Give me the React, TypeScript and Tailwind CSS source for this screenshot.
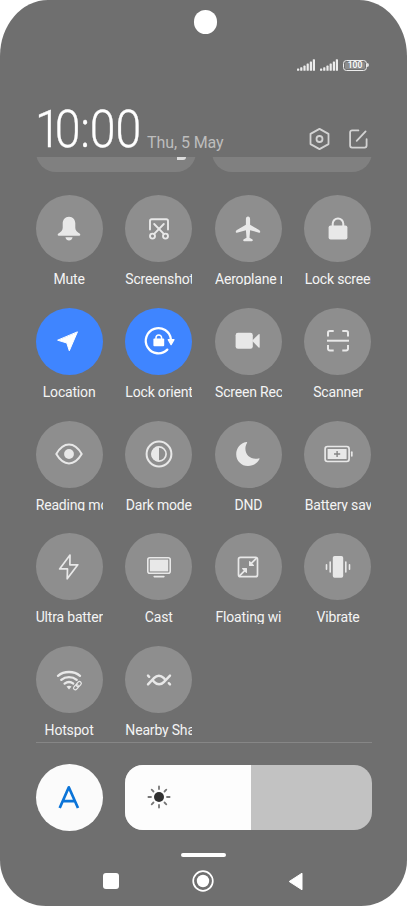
import React from 'react';

type Toggle = {
  label: string;
  icon: React.ReactNode;
  active?: boolean;
};

function Glyph({ children }: { children: React.ReactNode }) {
  return (
    <svg
      viewBox="-16 -16 32 32"
      width="32"
      height="32"
      fill="none"
      stroke="currentColor"
      strokeWidth="2"
      strokeLinecap="round"
      strokeLinejoin="round"
    >
      {children}
    </svg>
  );
}

const toggles: Toggle[] = [
  {
    label: 'Mute',
    icon: (
      <g fill="currentColor" stroke="none">
        <path d="M0-12.3C-4-12.3-6.3-9.3-6.3-5.5V-1C-6.3 1.6-8.5 3-10.6 4.6C-11.8 5.6-11.4 6.7-10.2 6.7H10.2C11.4 6.7 11.8 5.6 10.6 4.6C8.5 3 6.3 1.6 6.3-1V-5.5C6.3-9.3 4-12.3 0-12.3Z" />
        <path d="M-3.6 8.3H3.6C3 10.4 1.8 11.5 0 11.5S-3 10.4-3.6 8.3Z" />
      </g>
    ),
  },
  {
    label: 'Screenshot',
    icon: (
      <g strokeWidth="1.9">
        <path d="M-9 .6V-8A1.7 1.7 0 0 1-7.3-9.7H7.3A1.7 1.7 0 0 1 9-8V.6" />
        <path d="M-4.8-5L4.8 4.9M4.8-5L-4.8 4.9" />
        <circle cx="-6.5" cy="7.1" r="2.5" />
        <circle cx="6.5" cy="7.1" r="2.5" />
      </g>
    ),
  },
  {
    label: 'Aeroplane m',
    icon: (
      <path
        fill="currentColor"
        stroke="none"
        d="M0-12.4C1.4-12.4 2.1-11.5 2.1-10V-4.2L11.1 1.1C12 1.7 12.2 2.2 12.2 3C12.2 3.8 11.7 3.9 11 3.7L2.1 1.2L1.5 8.8L4.2 10.2C5.2 10.9 5 12.2 4 12.2H-4C-5 12.2-5.2 10.9-4.2 10.2L-1.5 8.8L-2.1 1.2L-11 3.7C-11.7 3.9-12.2 3.8-12.2 3C-12.2 2.2-12 1.7-11.1 1.1L-2.1-4.2V-10C-2.1-11.5-1.4-12.4 0-12.4Z"
      />
    ),
  },
  {
    label: 'Lock screen',
    icon: (
      <>
        <rect x="-9.4" y="-3.6" width="18.8" height="14.2" rx="2" fill="currentColor" stroke="none" />
        <path d="M-5.3-3V-5.2A5.3 5.3 0 0 1 5.3-5.2V-3" strokeLinecap="butt" />
      </>
    ),
  },
  {
    label: 'Location',
    active: true,
    icon: <path fill="currentColor" strokeWidth="1" d="M8.3-8.8L.3 9.8L-2.2 2L-11-.7Z" />,
  },
  {
    label: 'Lock orient',
    active: true,
    icon: (
      <>
        <path d="M8.3 8.6A12.6 12.6 0 1 1 11.9-1.6" strokeWidth="2.3" />
        <path d="M9.2-1.3H15L12.1 3.7Z" fill="currentColor" strokeWidth="1.2" />
        <rect x="-5.6" y="-2.4" width="10.8" height="7.6" rx="1" fill="currentColor" stroke="none" />
        <path d="M-3-2V-3.2A2.8 2.8 0 0 1 2.6-3.2V-2" strokeWidth="1.5" />
      </>
    ),
  },
  {
    label: 'Screen Rec',
    icon: (
      <g fill="currentColor" stroke="none">
        <rect x="-12.4" y="-8.2" width="17.2" height="16" rx="2.4" />
        <path d="M4-.2L10.6-6.8Q11.7-7.6 11.7-6.2V5.8Q11.7 7.2 10.6 6.4Z" />
      </g>
    ),
  },
  {
    label: 'Scanner',
    icon: (
      <g strokeLinecap="butt">
        <path d="M-10-4.4V-8.3A1.8 1.8 0 0 1-8.2-10.1H-4.3M4.3-10.1H8.2A1.8 1.8 0 0 1 10-8.3V-4.4M10 3.9V7.8A1.8 1.8 0 0 1 8.2 9.6H4.3M-4.3 9.6H-8.2A1.8 1.8 0 0 1-10 7.8V3.9" />
        <path d="M-11-.3H11" />
      </g>
    ),
  },
  {
    label: 'Reading mo',
    icon: (
      <>
        <path d="M-12.7 0C-9-6.3-4.8-9.4 0-9.4S9 -6.3 12.7 0C9 6.3 4.8 9.4 0 9.4S-9 6.3-12.7 0Z" />
        <circle r="4.9" fill="currentColor" stroke="none" />
      </>
    ),
  },
  {
    label: 'Dark mode',
    icon: (
      <>
        <circle r="12.4" />
        <circle r="7.1" strokeWidth="1.7" />
        <path d="M0-7.6A7.6 7.6 0 0 0 0 7.6Z" fill="currentColor" stroke="none" />
      </>
    ),
  },
  {
    label: 'DND',
    icon: (
      <path
        fill="currentColor"
        stroke="none"
        d="M-1.6-12C-7.8-11-11.8-5.8-11.8.2C-11.8 6.8-6.6 12-.1 12C5 12 9.5 9 11.4 5.3C11.7 4.5 11.3 4.2 10.6 4.4C3.5 6.2-2.6 1.5-2.6-5.2C-2.6-7.4-2-9.2-1-10.9C-.6-11.6-.9-12.1-1.6-12Z"
      />
    ),
  },
  {
    label: 'Battery sav',
    icon: (
      <>
        <rect x="-12.9" y="-7.5" width="24" height="15" rx="2.4" strokeWidth="1.7" />
        <rect x="-10.4" y="-5" width="19" height="10" rx=".6" fill="currentColor" stroke="none" />
        <path d="M-.9-3.1V3.1M-4 0H2.2" stroke="#858585" strokeWidth="1.4" strokeLinecap="butt" />
        <path d="M13.8-1.8V1.8" strokeWidth="1.7" />
      </>
    ),
  },
  {
    label: 'Ultra batter',
    icon: <path strokeWidth="1.7" d="M1-11.9L-9.4 1.9H-1.5L-1.8 11.8L8.8-2.2H.9Z" />,
  },
  {
    label: 'Cast',
    icon: (
      <>
        <rect x="-11.2" y="-9.3" width="22.4" height="15.6" rx="2" strokeWidth="1.6" />
        <rect x="-9.2" y="-7.4" width="18.4" height="11.8" fill="currentColor" stroke="none" />
        <path d="M-4.8 9.6H4.9" strokeWidth="1.6" />
      </>
    ),
  },
  {
    label: 'Floating wi',
    icon: (
      <g strokeWidth="1.7">
        <rect x="-9.5" y="-9.7" width="19" height="19.4" rx="2" />
        <path d="M8.3-8.6L3-3.3M-8.3 8.6L-3 3.3" />
        <path d="M1.6-5.3V-1.5H5.4ZM-1.6 5.3V1.5H-5.4Z" fill="currentColor" strokeWidth="1.2" />
      </g>
    ),
  },
  {
    label: 'Vibrate',
    icon: (
      <>
        <rect x="-5.2" y="-11" width="10.4" height="21.8" rx="1.8" fill="currentColor" stroke="none" />
        <path d="M-7.8-5V5M7.8-5V5M-11.5-2.3V2.3M11.5-2.3V2.3" strokeWidth="1.6" />
      </>
    ),
  },
  {
    label: 'Hotspot',
    icon: (
      <>
        <path d="M-11-4.2C-5-9.2 5-9.2 11-4.2M-7.7-.2C-3.4-3.8 3.4-3.8 7.7-.2M-4.4 3.6C-1.8 1.6 1.8 1.6 4.4 3.6" strokeWidth="2.4" />
        <path d="M-2.5 6.5Q0 4.9 2.5 6.5L0 9.5Z" fill="currentColor" stroke="none" />
        <circle cx="8.9" cy="6.1" r="4.2" fill="#8e8e8e" stroke="none" />
        <g transform="translate(8.4 5.7) rotate(-48)" strokeWidth="1.2">
          <rect x="-4.9" y="-1.8" width="5.7" height="3.6" rx="1.8" />
          <rect x="-.8" y="-1.8" width="5.7" height="3.6" rx="1.8" />
        </g>
      </>
    ),
  },
  {
    label: 'Nearby Sha',
    icon: (
      <g strokeWidth="2.4">
        <path d="M-11 4.4L-4.8-2.1C-2-5 1.8-5 4.6-2.1L6-.7" />
        <path d="M11-4.4L4.8 2.1C2 5-1.8 5-4.6 2.1L-6 .7" />
        <path d="M-11-4.4L-9.8-3.2M11 4.4L9.8 3.2" />
      </g>
    ),
  },
];

function Signal() {
  return (
    <svg viewBox="0 0 18 12" width="18" height="12" fill="#ececec">
      <rect x="0" y="9.6" width="2.2" height="2.2" rx=".6" />
      <rect x="3.2" y="8.2" width="2.2" height="3.6" rx=".6" />
      <rect x="6.4" y="6.6" width="2.2" height="5.2" rx=".6" />
      <rect x="9.6" y="4.4" width="2.2" height="7.4" rx=".6" />
      <rect x="12.8" y="2.4" width="2.2" height="9.4" rx=".6" />
      <rect x="15.8" y=".2" width="2.2" height="11.6" rx=".6" />
    </svg>
  );
}

function StatusBar() {
  return (
    <div className="mt-[24px] flex h-[14px] shrink-0 items-center justify-end pr-[38px]">
      <Signal />
      <div className="w-[5px]" />
      <Signal />
      <div className="w-[5px]" />
      <div className="flex h-[11px] w-[24px] items-center justify-center rounded-[3.5px] border border-[#ececec] p-px">
        <div className="flex h-full w-full items-center justify-center rounded-[1.5px] bg-[#8c8c8c] text-[8.5px] leading-none font-medium text-white">
          100
        </div>
      </div>
      <div className="h-1 w-[2px] rounded-r-sm bg-[#e0e0e0]" />
    </div>
  );
}

function Header() {
  return (
    <div className="flex h-[85px] shrink-0 items-end px-[36px]">
      <div className="h-[57.5px] w-[111px]">
        <div className="-ml-px w-max origin-left scale-x-[0.9] text-[51.5px] leading-[60px] font-light text-white [-webkit-text-stroke:0.3px_white]">
          <span className="tracking-[-6.6px]">1</span>
          <span className="tracking-[-0.2px]">0:</span>
          <span className="tracking-[-0.2px]">00</span>
        </div>
      </div>
      <div className="h-[29px] text-[16px] leading-[29px] tracking-[-0.08px] text-[#bdbdbd]">Thu, 5 May</div>
      <div className="mb-[6px] ml-auto flex items-center gap-[15px]">
        <svg viewBox="0 0 24 24" width="24" height="24" fill="none" stroke="#d2d2d2" strokeWidth="1.8" strokeLinejoin="round">
          <path d="M11.5 1.9L20.5 6.9V17.1L11.5 22.1L2.5 17.1V6.9Z" />
          <circle cx="11.5" cy="12" r="3" />
        </svg>
        <svg viewBox="0 0 24 24" width="24" height="24" fill="none" stroke="#d2d2d2" strokeWidth="1.8" strokeLinecap="round">
          <path d="M11.4 3.4H5.1A2 2 0 0 0 3.1 5.4V18.6A2 2 0 0 0 5.1 20.6H17.6A2 2 0 0 0 19.6 18.6V12.2" />
          <path d="M9.7 13.8L18.6 4.4" />
        </svg>
      </div>
    </div>
  );
}

function ToggleTile({ label, icon, active }: Toggle) {
  return (
    <div className="h-[90.4px] w-[67px] overflow-hidden">
      <div
        className={`flex h-[67px] w-[67px] items-center justify-center rounded-full ${
          active ? 'bg-[#3f85ff] text-white' : 'bg-[#8e8e8e] text-[#e8e8e8]'
        }`}
      >
        <Glyph>{icon}</Glyph>
      </div>
      <div className="mt-[9px] pl-[0.2px] text-center text-[14px] leading-[16px] tracking-[-0.18px] whitespace-nowrap text-[#f4f4f4]">
        {label}
      </div>
    </div>
  );
}

function Brightness() {
  return (
    <div className="mx-[35.5px] mt-[20.5px] flex items-center justify-between">
      <div className="flex h-[67.5px] w-[67.5px] items-center justify-center rounded-full bg-[#fbfbfb]">
        <svg viewBox="0 0 22 24" width="22" height="24" fill="none" stroke="#0b74d8" strokeWidth="2.7" strokeLinejoin="round">
          <path d="M1.7 23L10.8 2.3L20 23M5 16.2H16.7" />
        </svg>
      </div>
      <div className="flex h-[64.5px] w-[247px] overflow-hidden rounded-[18px] bg-[#c2c2c2]">
        <div className="flex h-full w-[126.5px] items-center bg-[#fdfdfd] pl-[22.5px]">
          <svg viewBox="-12 -12 24 24" width="24" height="24" stroke="#777" strokeWidth="1.8" strokeLinecap="round">
            <circle r="5" fill="#303030" stroke="none" />
            <path d="M0-8V-10.6M0 8V10.6M-8 0H-10.6M8 0H10.6M5.5-5.5L7.3-7.3M5.5 5.5L7.3 7.3M-5.5-5.5L-7.3-7.3M-5.5 5.5L-7.3 7.3" />
          </svg>
        </div>
      </div>
    </div>
  );
}

function NavBar() {
  return (
    <>
      <div className="mx-auto mt-[22px] h-1 w-[45px] shrink-0 rounded-full bg-white" />
      <div className="mt-[12.5px] flex h-[23px] shrink-0 items-center justify-between pr-[104px] pl-[102.5px]">
        <div className="h-[16px] w-[16px] rounded-[3px] bg-white" />
        <svg viewBox="-12 -12 24 24" width="24" height="24">
          <circle r="9.8" fill="none" stroke="#fff" strokeWidth="1.7" />
          <circle r="6.2" fill="#fff" />
        </svg>
        <svg viewBox="0 0 15 19" width="15" height="19">
          <path d="M1.2 9.5L14 1.2V17.8Z" fill="#fff" stroke="#fff" strokeLinejoin="round" />
        </svg>
      </div>
    </>
  );
}

export default function App() {
  return (
    <div className="h-[906px] w-[407px] bg-white font-[Roboto,sans-serif]">
      <div className="flex h-full flex-col overflow-hidden rounded-t-[48px_56px] rounded-b-[46px] bg-[#6f6f6f]">
        <div className="mt-[10px] ml-[193.5px] h-[24px] w-[23.5px] shrink-0 rounded-full bg-white" />
        <StatusBar />
        <Header />
        <div className="mx-[35.5px] flex h-[15px] shrink-0 items-end justify-between overflow-hidden">
          <div className="flex h-[42px] w-[160px] justify-end rounded-[20px] bg-[#808080] pt-[27px] pr-[10px]">
            <div className="h-[3px] w-[9px] rounded-br-[3px] bg-[#dcdcdc]" />
          </div>
          <div className="h-[42px] w-[160px] rounded-[20px] bg-[#808080]" />
        </div>
        <div className="mx-[35.5px] mt-[23px] grid shrink-0 grid-cols-[repeat(4,67px)] justify-between gap-y-[22.4px]">
          {toggles.map((toggle) => (
            <ToggleTile key={toggle.label} {...toggle} />
          ))}
        </div>
        <div className="mx-[35.5px] mt-[5.5px] h-px shrink-0 bg-[#868686]" />
        <Brightness />
        <NavBar />
      </div>
    </div>
  );
}
